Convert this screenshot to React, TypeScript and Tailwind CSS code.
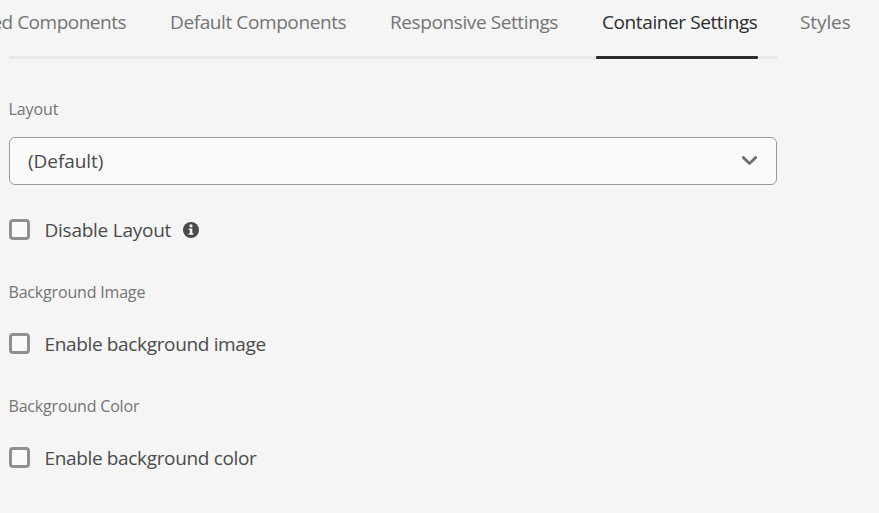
import React from "react";

function Checkbox({ label, tracking, children }: { label: string; tracking: string; children?: React.ReactNode }) {
  return (
    <label className="flex h-[21px] items-center text-[19px] leading-[21px] text-[#4b4b4b]">
      <span className="h-[21px] w-[21px] shrink-0 rounded-[4px] border-3 border-[#909090] bg-[#fafafa]" />
      <span className={`ml-[14.5px] pt-0.5 whitespace-nowrap ${tracking}`}>{label}</span>
      {children}
    </label>
  );
}

function FieldLabel({ text, tracking }: { text: string; tracking: string }) {
  return <div className={`-ml-[0.5px] h-6 text-[16px] leading-6 whitespace-nowrap text-[#747474] ${tracking}`}>{text}</div>;
}

function InfoIcon() {
  return (
    <svg className="ml-3 shrink-0" width="16" height="16" viewBox="0 0 16 16">
      <circle cx="8" cy="8" r="8" fill="#4b4b4b" />
      <circle cx="8" cy="3.8" r="1.6" fill="#f5f5f5" />
      <path d="M5.8 6.4h3.5v4.8h1.1v1.6H5.7v-1.6h1.1V8h-1z" fill="#f5f5f5" />
    </svg>
  );
}

export default function App() {
  return (
    <div className="h-[513px] w-[879px] overflow-hidden bg-[#f5f5f5] font-['Open_Sans','Noto_Sans',sans-serif]">
      <nav className="flex h-14 pt-2 text-[19px] leading-7 whitespace-nowrap text-[#747474]">
        <div className="flex w-[126px] justify-end overflow-hidden tracking-[-0.5px]">Allowed Components</div>
        <div className="ml-[43px] w-[177px] pl-px tracking-[-0.4px]">Default Components</div>
        <div className="ml-[43px] w-[169px] pl-px tracking-[-0.4px]">Responsive Settings</div>
        <div className="ml-[43px] w-[156px] pl-px tracking-[-0.4px] text-[#2c2c2c]">Container Settings</div>
        <div className="ml-[43px] tracking-[-0.1px]">Styles</div>
      </nav>
      <div className="ml-[9px] h-[3px] w-[768px] bg-[#eaeaea] pl-[587px]">
        <div className="h-[3px] w-[161.5px] rounded-[1px] bg-[#2c2c2c]" />
      </div>
      <main className="ml-[9px] w-[768px] pt-[38px]">
        <FieldLabel text="Layout" tracking="tracking-[-0.1px]" />
        <button className="mt-4 flex h-12 w-full items-center justify-between rounded-[6px] border border-[#999] bg-[#fafafa] px-[18px] text-[19px] text-[#4b4b4b]">
          <span className="tracking-[-0.05px]">(Default)</span>
          <svg className="-mt-px" width="17" height="11" viewBox="0 0 17 11" fill="none" stroke="#6e6e6e" strokeWidth="2.8" strokeLinecap="round" strokeLinejoin="round">
            <path d="M2.3 2.5 8.5 8.5l6.2-6" />
          </svg>
        </button>
        <div className="mt-[34px]">
          <Checkbox label="Disable Layout" tracking="tracking-[-0.25px]">
            <InfoIcon />
          </Checkbox>
        </div>
        <div className="mt-10">
          <FieldLabel text="Background Image" tracking="tracking-[-0.18px]" />
        </div>
        <div className="mt-[29px]">
          <Checkbox label="Enable background image" tracking="tracking-[-0.35px]" />
        </div>
        <div className="mt-10">
          <FieldLabel text="Background Color" tracking="tracking-[-0.18px]" />
        </div>
        <div className="mt-[29px]">
          <Checkbox label="Enable background color" tracking="tracking-[-0.35px]" />
        </div>
      </main>
    </div>
  );
}
